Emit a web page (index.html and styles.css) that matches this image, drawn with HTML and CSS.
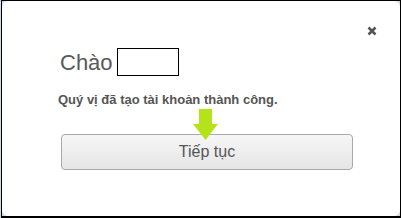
FILE: index.html
```html
<!DOCTYPE html>
<html lang="vi">
<head>
<meta charset="utf-8">
<link rel="stylesheet" href="styles.css">
</head>
<body>
<div class="screen">
  <div class="frame">
    <div class="dialog">
      <button class="close" aria-label="Đóng">
        <svg width="10" height="10" viewBox="0 0 10 10"><path d="M1.5 1.5L8.5 8.5M8.5 1.5L1.5 8.5" stroke="#555" stroke-width="2.6" stroke-linecap="butt"/></svg>
      </button>
      <div class="content">
        <div class="greeting">
          <span class="hello">Chào</span>
          <span class="name-box"></span>
        </div>
        <p class="message">Quý vị đã tạo tài khoản thành công.</p>
        <div class="action">
          <button class="continue">Tiếp tục</button>
          <svg class="arrow" width="26" height="32" viewBox="0 0 26 32"><path d="M6 0H19V15H25L12.5 31L0 15H6Z" fill="#b5e31a"/></svg>
        </div>
      </div>
    </div>
  </div>
</div>
</body>
</html>
```
FILE: styles.css
```css
html, body {
  margin: 0;
  padding: 0;
}
body {
  width: 401px;
  height: 218px;
  overflow: hidden;
  font-family: "Liberation Sans", Arial, sans-serif;
}
.screen {
  width: 401px;
  height: 218px;
  box-sizing: border-box;
  padding-left: 1px;
  background: #cddbe6;
  display: flex;
}
.frame {
  flex: 1;
  border-top: 1px solid #000;
  border-left: 1px solid #000;
  border-right: 1px solid #000;
  border-bottom: 2px solid #000;
  background: #cddbe6;
  display: flex;
}
.dialog {
  flex: 1;
  position: relative;
  background: #fff;
  border-radius: 6px;
}
.close {
  position: absolute;
  top: 25px;
  right: 23px;
  width: 10px;
  height: 10px;
  padding: 0;
  border: 0;
  background: none;
  display: block;
}
.close svg { display: block; }
.content {
  padding: 47px 46px 0 56px;
}
.greeting {
  display: flex;
  align-items: flex-end;
  height: 28px;
}
.hello {
  font-size: 22px;
  line-height: 22px;
  color: #595959;
  margin-left: 2px;
  padding-bottom: 2px;
}
.name-box {
  width: 60px;
  height: 26px;
  border: 1px solid #000;
  margin-left: 4px;
}
.message {
  margin: 16px 0 0 0;
  font-size: 13px;
  line-height: 15px;
  font-weight: bold;
  color: #555;
}
.action {
  position: relative;
  margin-top: 27px;
  padding-left: 3px;
}
.continue {
  display: block;
  width: 292px;
  height: 36px;
  border: 1px solid #a9a9a9;
  border-radius: 4px;
  background: linear-gradient(#f6f6f6, #e5e5e5);
  font-family: "Liberation Sans", Arial, sans-serif;
  font-size: 16px;
  color: #555;
  padding: 0;
}
.arrow {
  position: absolute;
  left: 135px;
  top: -25px;
}
```
